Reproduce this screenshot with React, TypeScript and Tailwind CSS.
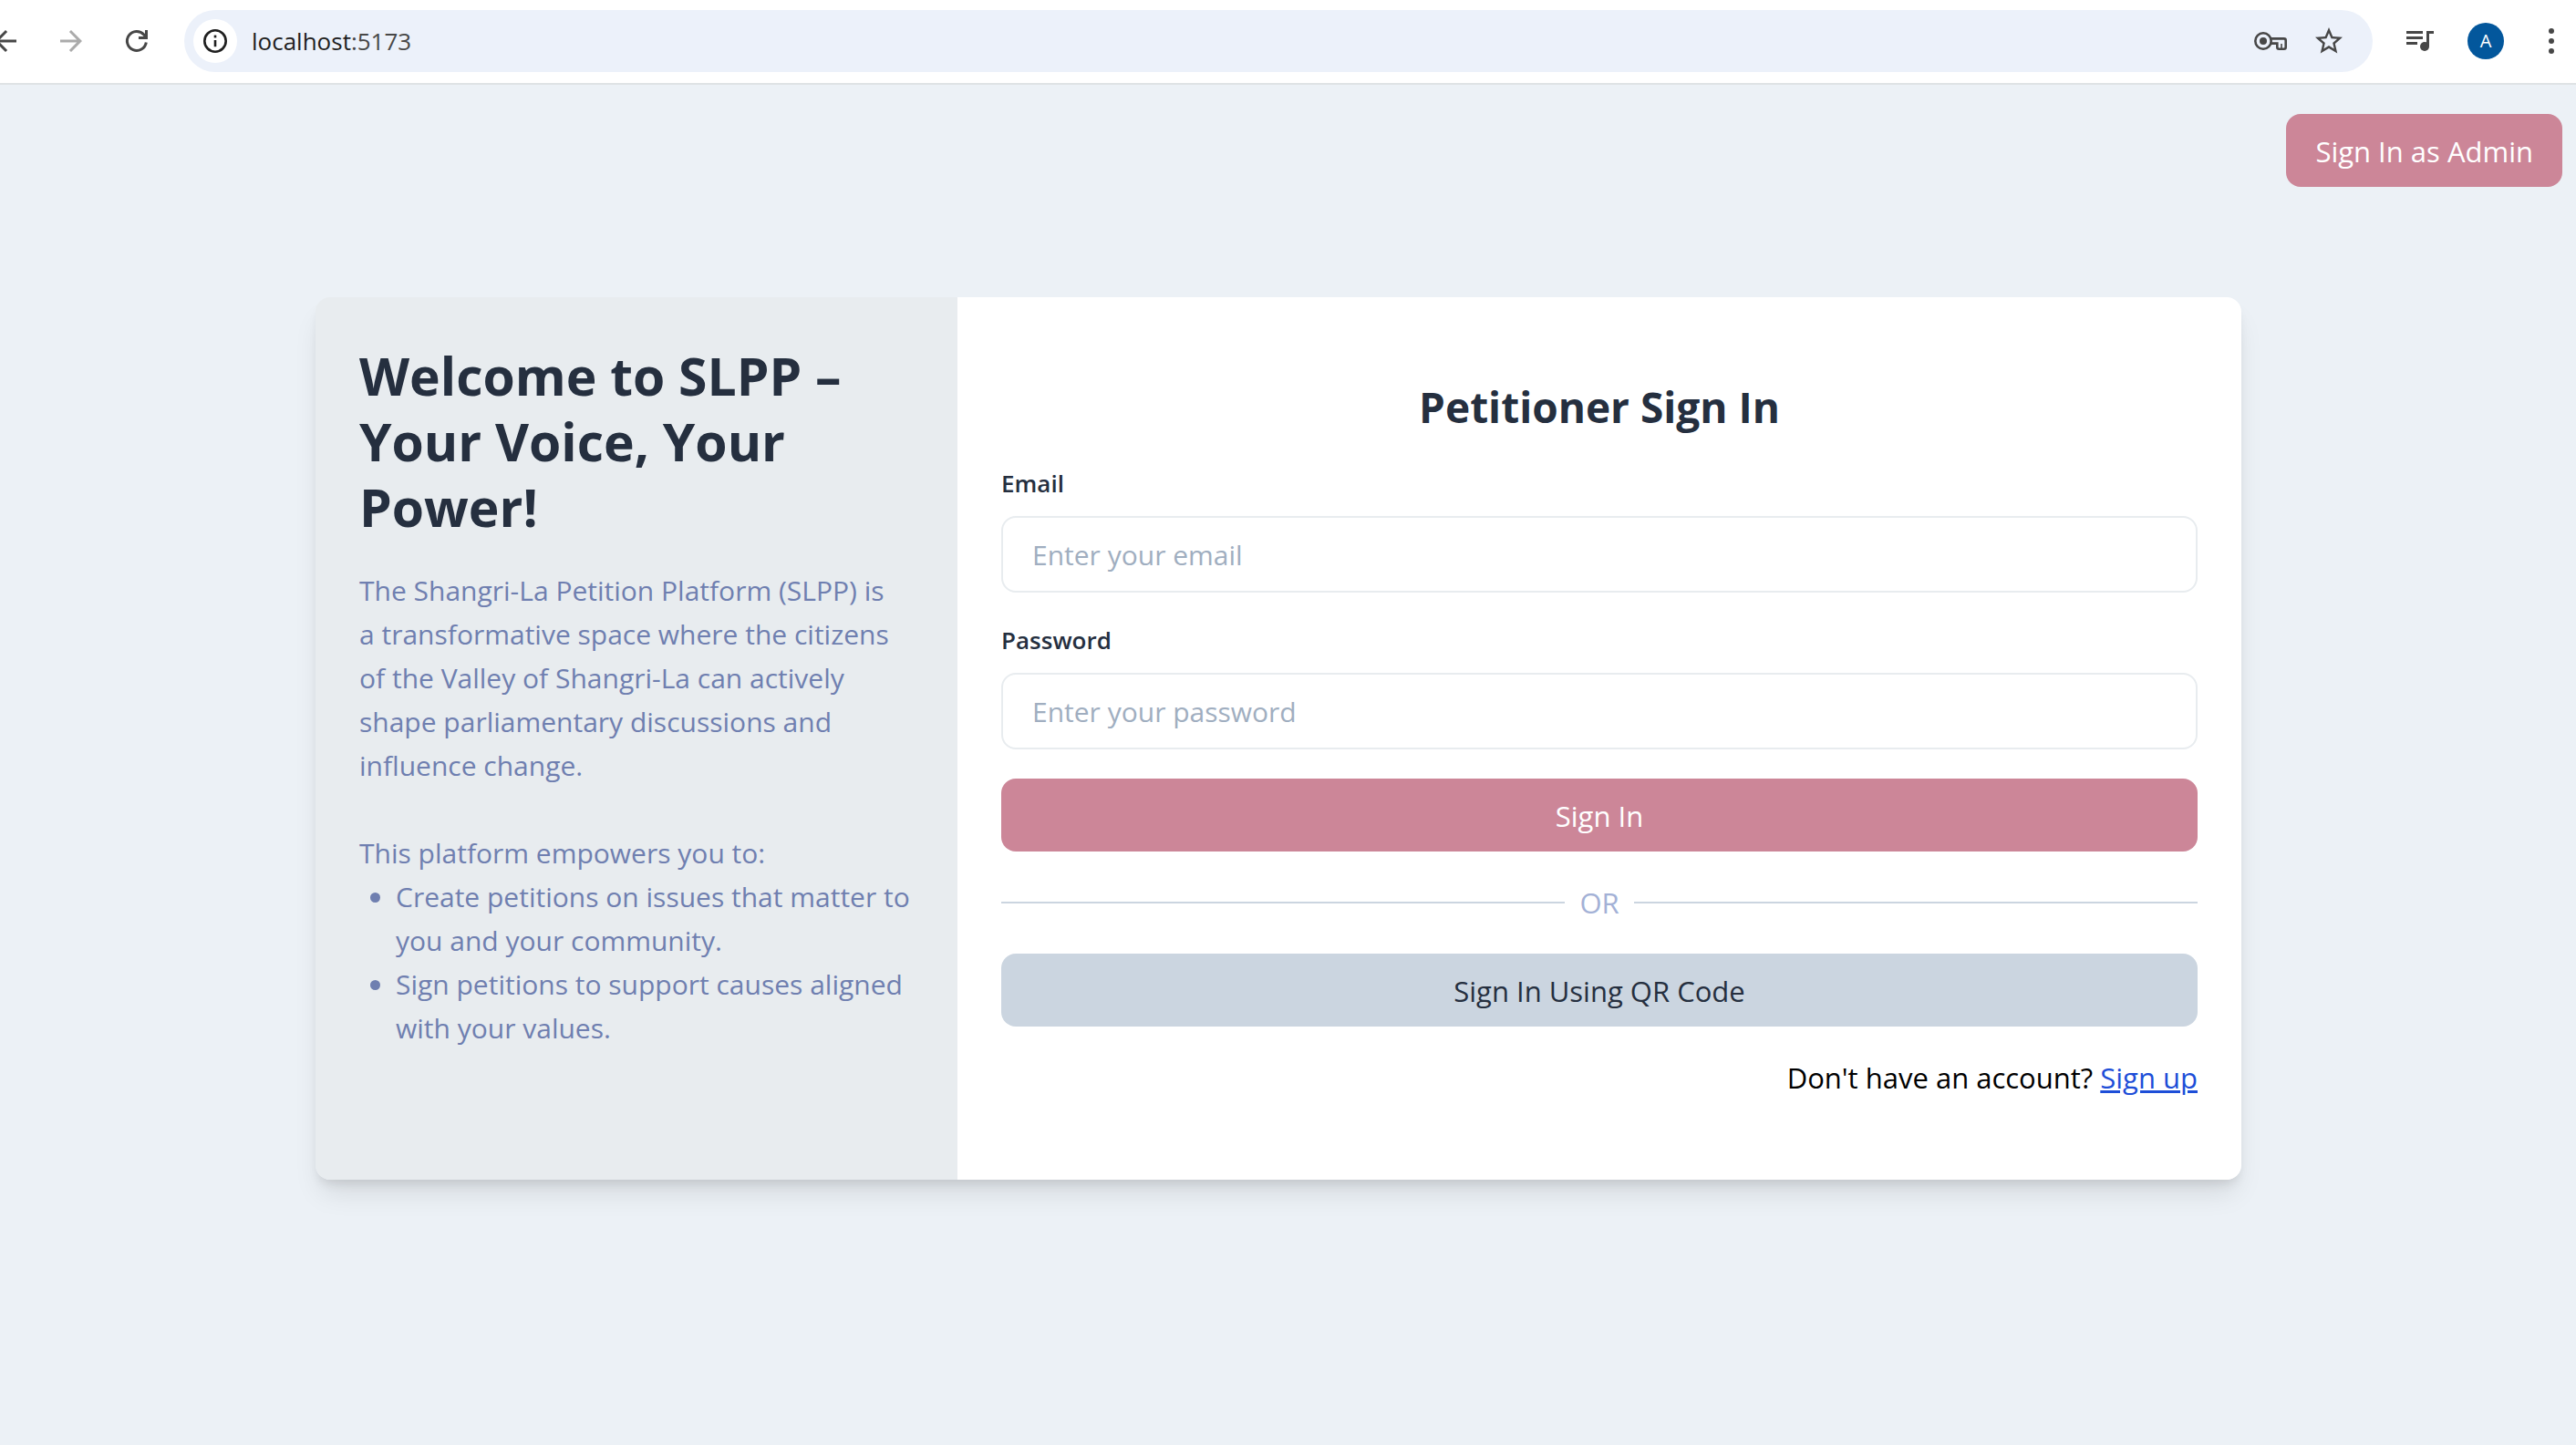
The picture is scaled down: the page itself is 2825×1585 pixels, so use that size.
import type { ReactNode } from "react";

function ToolbarButton({ label, className = "", children }: { label: string; className?: string; children: ReactNode }) {
  return (
    <button type="button" aria-label={label} className={`flex size-9 shrink-0 items-center justify-center ${className}`}>
      {children}
    </button>
  );
}

function BackIcon() {
  return (
    <svg viewBox="0 0 24 24" className="size-9" fill="currentColor">
      <path d="M20 11H7.83l5.59-5.59L12 4l-8 8 8 8 1.41-1.41L7.83 13H20v-2z" />
    </svg>
  );
}

function ForwardIcon() {
  return (
    <svg viewBox="0 0 24 24" className="size-9" fill="currentColor">
      <path d="M12 4l-1.41 1.41L16.17 11H4v2h12.17l-5.58 5.59L12 20l8-8z" />
    </svg>
  );
}

function ReloadIcon() {
  return (
    <svg viewBox="0 0 36 36" className="size-9" fill="none" stroke="currentColor" strokeWidth="3">
      <path d="M28.3 19.5A10.5 10.5 0 1 1 25.8 11L28 13.5" />
      <path d="M28.5 6V14.5H20" />
    </svg>
  );
}

function InfoIcon() {
  return (
    <svg viewBox="0 0 26 26" className="size-[26px]" fill="none" stroke="currentColor" strokeWidth="2.6">
      <circle cx="13" cy="13" r="11.7" />
      <path d="M13 12v7.2" />
      <path d="M13 6.6v2.8" />
    </svg>
  );
}

function KeyIcon() {
  return (
    <svg viewBox="0 0 36 20" className="h-5 w-9" fill="none" stroke="currentColor" strokeWidth="2.6">
      <circle cx="10" cy="10" r="8.7" />
      <circle cx="10" cy="10" r="4" fill="currentColor" stroke="none" />
      <path d="M18 7.4H32.7Q34.7 7.4 34.7 9.4V16.7Q34.7 18.7 32.7 18.7H27.3Q25.3 18.7 25.3 16.7V12.6H18.4" />
      <path d="M30 13v5" strokeWidth="1.6" />
    </svg>
  );
}

function StarIcon() {
  return (
    <svg viewBox="0 0 24 24" className="size-9" fill="currentColor">
      <path d="M22 9.24l-7.19-.62L12 2 9.19 8.63 2 9.24l5.46 4.73L5.82 21 12 17.27 18.18 21l-1.63-7.03L22 9.24zM12 15.4l-3.76 2.27 1-4.28-3.32-2.88 4.38-.38L12 6.1l1.71 4.04 4.38.38-3.32 2.88 1 4.28L12 15.4z" />
    </svg>
  );
}

function MediaIcon() {
  return (
    <svg viewBox="0 0 30 22" className="h-[22px] w-[30px]" fill="currentColor">
      <path d="M0 0h18v3H0zM0 6h18v3H0zM0 12h12v3H0z" />
      <path d="M22 0h8v3h-5v14h-3z" />
      <circle cx="20" cy="17" r="5" />
    </svg>
  );
}

function MenuIcon() {
  return (
    <svg viewBox="0 0 6 28" className="h-7 w-1.5" fill="currentColor">
      <circle cx="3" cy="3" r="3" />
      <circle cx="3" cy="14" r="3" />
      <circle cx="3" cy="25" r="3" />
    </svg>
  );
}

function BrowserBar() {
  return (
    <header className="flex h-[93px] items-center border-b-2 border-[#dfe3e5] bg-white pb-px text-[#474747]">
      <nav aria-label="Browser" className="flex items-center gap-9">
        <ToolbarButton label="Back">
          <BackIcon />
        </ToolbarButton>
        <ToolbarButton label="Forward" className="text-[#ababab]">
          <ForwardIcon />
        </ToolbarButton>
        <ToolbarButton label="Reload">
          <ReloadIcon />
        </ToolbarButton>
      </nav>
      <div className="mx-[34px] flex h-[68px] flex-1 items-center rounded-full bg-[#ecf1fa] pr-[30px] pl-2.5">
        <button
          type="button"
          aria-label="View site information"
          className="flex size-12 items-center justify-center rounded-full bg-white text-[#1f1f1f]"
        >
          <InfoIcon />
        </button>
        <p className="ml-4 flex-1 text-[26px] leading-9 text-[#1f1f1f]">
          localhost<span className="text-[#474747]">:5173</span>
        </p>
        <div className="flex items-center gap-7">
          <ToolbarButton label="Manage passwords">
            <KeyIcon />
          </ToolbarButton>
          <ToolbarButton label="Bookmark this page">
            <StarIcon />
          </ToolbarButton>
        </div>
      </div>
      <div className="flex items-center gap-[34px] pr-[9px]">
        <ToolbarButton label="Media controls">
          <MediaIcon />
        </ToolbarButton>
        <button
          type="button"
          aria-label="Profile"
          className="flex size-10 items-center justify-center rounded-full bg-[#03579c] text-xl text-white"
        >
          A
        </button>
        <ToolbarButton label="Menu">
          <MenuIcon />
        </ToolbarButton>
      </div>
    </header>
  );
}

function Field({ id, label, type, placeholder }: { id: string; label: string; type: string; placeholder: string }) {
  return (
    <div className="flex flex-col gap-4">
      <label htmlFor={id} className="text-[26px] leading-10 font-semibold text-[#252f3f]">
        {label}
      </label>
      <input
        id={id}
        type={type}
        placeholder={placeholder}
        className="w-full rounded-2xl border-2 border-[#e8ecef] bg-white px-8 pt-[17px] pb-[15px] text-[30px] leading-[48px] text-[#252f3f] placeholder:text-[#a0aec0]"
      />
    </div>
  );
}

function WelcomePanel() {
  return (
    <section className="w-1/3 bg-[#e8ecef] px-12 pt-[50px] pb-12 text-[30px] text-[#6f7fb0]">
      <h1 className="mb-8 text-[57px] leading-[72px] font-bold text-[#252f3f]">
        Welcome to SLPP – Your Voice, Your Power!
      </h1>
      <p className="mb-12 pr-4">
        The Shangri-La Petition Platform (SLPP) is a transformative space where the citizens of the Valley of
        Shangri-La can actively shape parliamentary discussions and influence change.
      </p>
      <p>This platform empowers you to:</p>
      <ul className="-mr-4 list-disc pl-10">
        <li>Create petitions on issues that matter to you and your community.</li>
        <li>Sign petitions to support causes aligned with your values.</li>
      </ul>
    </section>
  );
}

function SignInPanel() {
  return (
    <section className="flex w-2/3 flex-col gap-8 bg-white px-12 py-[88px]">
      <form className="flex flex-col gap-8" onSubmit={(event) => event.preventDefault()}>
        <h2 className="text-center text-[46px] leading-[64px] font-bold text-[#252f3f]">Petitioner Sign In</h2>
        <Field id="email" label="Email" type="email" placeholder="Enter your email" />
        <Field id="password" label="Password" type="password" placeholder="Enter your password" />
        <button type="submit" className="w-full rounded-2xl bg-[#cc8698] pt-[17px] pb-[15px] text-white">
          Sign In
        </button>
      </form>
      <div className="flex items-center gap-4 text-[#a3b1d6]">
        <hr className="flex-1 border-t-2 border-[#cbd5e0]" />
        <span>OR</span>
        <hr className="flex-1 border-t-2 border-[#cbd5e0]" />
      </div>
      <button type="button" className="w-full rounded-2xl bg-[#cbd5e0] pt-[17px] pb-[15px] text-[#252f3f]">
        Sign In Using QR Code
      </button>
      <p className="text-right text-black">
        Don't have an account?{" "}
        <a href="#signup" className="text-[#1d4ed8] underline">
          Sign up
        </a>
      </p>
    </section>
  );
}

export default function App() {
  return (
    <div className="min-h-screen overflow-hidden bg-[#ecf1f6] font-['Open_Sans','Noto_Sans',sans-serif]">
      <div className="-ml-3">
        <BrowserBar />
      </div>
      <main className="mr-[15px] -ml-1.5 flex flex-col items-center pt-8 text-[31px] leading-[48px]">
        <button type="button" className="self-end rounded-2xl bg-[#cc8698] px-8 pt-[17px] pb-[15px] text-white">
          Sign In as Admin
        </button>
        <div className="mt-[121px] flex w-3/4 overflow-hidden rounded-2xl shadow-[0_20px_30px_-6px_rgb(0_0_0/0.1),0_8px_12px_-4px_rgb(0_0_0/0.1)]">
          <WelcomePanel />
          <SignInPanel />
        </div>
      </main>
    </div>
  );
}
